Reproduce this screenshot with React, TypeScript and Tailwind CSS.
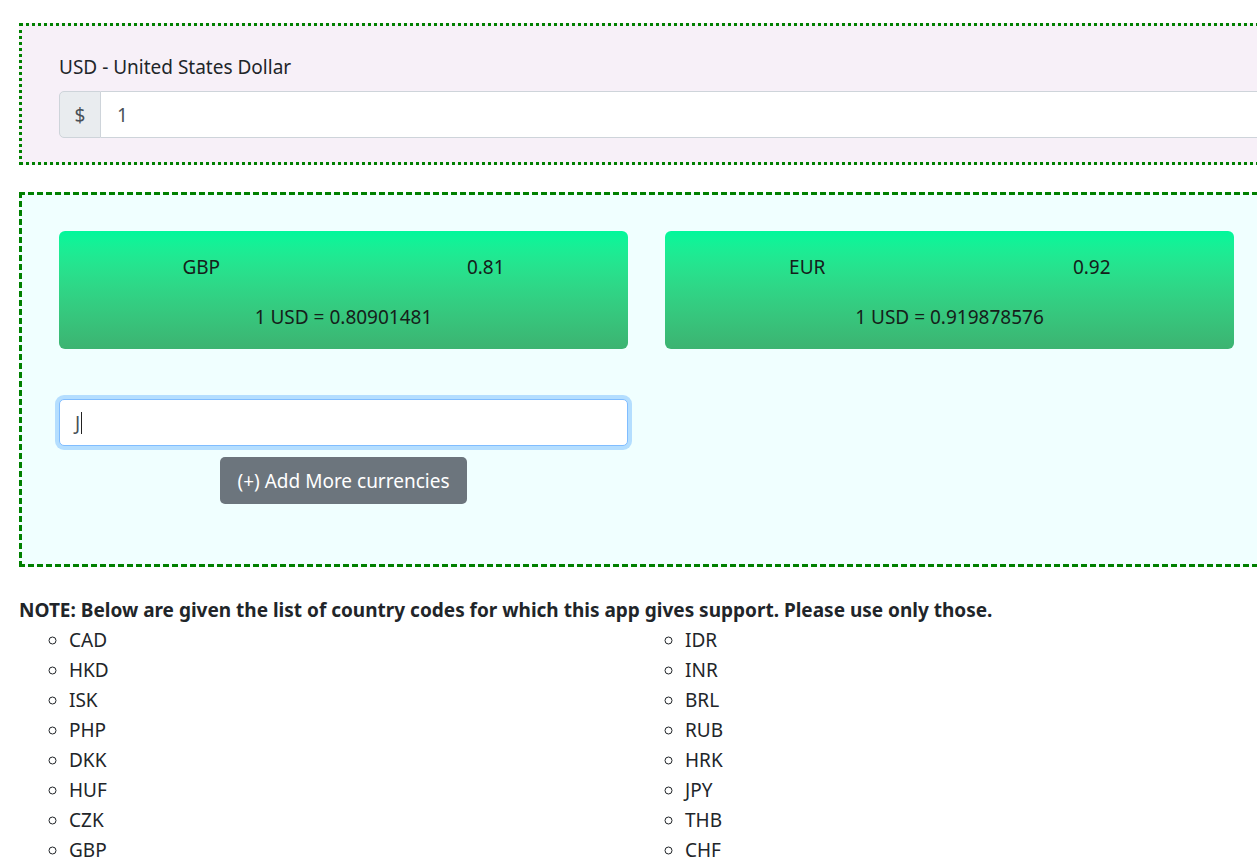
const LEFT_CODES = ["CAD", "HKD", "ISK", "PHP", "DKK", "HUF", "CZK", "GBP", "RON", "SEK"];
const RIGHT_CODES = ["IDR", "INR", "BRL", "RUB", "HRK", "JPY", "THB", "CHF", "EUR", "MYR"];

type Rate = { code: string; short: string; full: string };

const RATES: Rate[] = [
  { code: "GBP", short: "0.81", full: "0.80901481" },
  { code: "EUR", short: "0.92", full: "0.919878576" },
];

function RateCard({ rate }: { rate: Rate }) {
  return (
    <div className="flex h-[118px] w-[569px] flex-col gap-[20px] rounded-[6px] bg-gradient-to-b from-[#00f89b] to-[#3cb371] pt-[21px] text-[#15201a]">
      <div className="grid grid-cols-2 text-center">
        <span>{rate.code}</span>
        <span>{rate.short}</span>
      </div>
      <div className="text-center">1 USD = {rate.full}</div>
    </div>
  );
}

export default function App() {
  return (
    <div
      className="w-full overflow-hidden pb-[40px] text-[19px] leading-[30px] text-[#212529]"
      style={{ fontFamily: "'Noto Sans', 'Open Sans', sans-serif" }}
    >
      <div className="ml-[19px] mt-[23px] w-[1320px] border-[3px] border-dotted border-[#008000] bg-[#f7f0f8] px-[37px] pb-[24px] pt-[26px]">
        <div className="mb-[9px]">USD - United States Dollar</div>
        <div className="flex h-[47px]">
          <div className="flex w-[42px] items-center justify-center rounded-l-[5px] border border-[#ced4da] bg-[#e9ecef] text-[#495057]">
            $
          </div>
          <div className="flex flex-1 items-center border border-l-0 border-[#ced4da] bg-white pl-[16px] text-[#495057]">
            1
          </div>
        </div>
      </div>

      <div className="ml-[19px] mt-[27px] w-[1320px] border-[3px] border-dashed border-[#008000] bg-[#f0ffff] px-[37px] pb-[60px] pt-[36px]">
        <div className="flex gap-[37px]">
          {RATES.map((r) => (
            <RateCard key={r.code} rate={r} />
          ))}
        </div>

        <div className="mt-[50px] flex w-[569px] flex-col items-center gap-[11px]">
          <div className="flex h-[47px] w-full items-center rounded-[5px] border border-[#80bdff] bg-white pl-[15px] text-[#495057] shadow-[0_0_0_4px_rgba(0,123,255,0.25)]">
            <span>J</span>
            <span className="ml-[1px] h-[22px] w-px bg-[#222]" />
          </div>
          <button
            type="button"
            className="h-[47px] w-[247px] rounded-[5px] bg-[#6c757d] text-white"
          >
            (+) Add More currencies
          </button>
        </div>
      </div>

      <div className="ml-[19px] mt-[28px] font-bold">
        NOTE: Below are given the list of country codes for which this app gives support. Please use only those.
      </div>
      <div className="ml-[19px] flex">
        <ul className="w-[616px] list-[circle] pl-[50px]">
          {LEFT_CODES.map((c) => (
            <li key={c}>{c}</li>
          ))}
        </ul>
        <ul className="list-[circle] pl-[50px]">
          {RIGHT_CODES.map((c) => (
            <li key={c}>{c}</li>
          ))}
        </ul>
      </div>
    </div>
  );
}
